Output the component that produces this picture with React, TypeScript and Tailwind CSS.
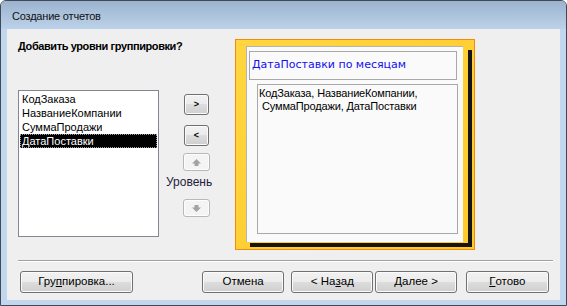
import React from "react";

const btn =
  "flex items-center justify-center rounded-[3px] border border-[#707070] bg-[linear-gradient(#f2f2f2,#ebebeb_50%,#dddddd_50%,#cfcfcf)] shadow-[inset_0_0_0_1px_#fbfbfb] text-[11.5px] text-black";
const btnOff =
  "flex items-center justify-center rounded-[3px] border border-[#b5b9bc] bg-[#f4f4f4] shadow-[inset_0_0_0_1px_#fdfdfd]";

function Arrow({ down }: { down?: boolean }) {
  return (
    <svg width="9" height="7" viewBox="0 0 9 7" className={down ? "rotate-180" : ""}>
      <path d="M4.5 0 L9 4.5 L6.5 4.5 L6.5 7 L2.5 7 L2.5 4.5 L0 4.5 Z" fill="#a3a3a3" />
    </svg>
  );
}

const fields = ["КодЗаказа", "НазваниеКомпании", "СуммаПродажи", "ДатаПоставки"];

export default function App() {
  return (
    <div className="flex h-[306px] w-[567px] flex-col rounded-t-[6px] border border-[#3c4a5a] bg-[#c2d7ee] font-['Liberation_Sans',sans-serif] text-[12px] text-black">
      {/* title bar */}
      <div className="flex h-[28px] items-center rounded-t-[5px] bg-[linear-gradient(#9cb2cd,#a9c0da_40%,#bcd2ea)] px-[11px] pt-[2px] text-[11px] tracking-[-0.2px] text-[#111]">
        Создание отчетов
      </div>

      <div className="mx-[6px] mb-[5px] flex flex-1 flex-col bg-[#efefef]">
        <div className="flex px-[11px] pt-[9px]">
          {/* left side */}
          <div className="w-[217px]">
            <div className="text-[11px] font-bold leading-[16px] tracking-[-0.4px]">Добавить уровни группировки?</div>
            <div className="mt-[36px] flex">
              <div className="h-[147px] w-[141px] border border-[#828790] bg-white px-[1px] pt-[1px] text-[11px]">
                {fields.map((f, i) =>
                  i === 3 ? (
                    <div
                      key={f}
                      className="h-[14px] border border-dotted border-[#9a9a9a] bg-black pl-[1px] leading-[12px] text-white"
                    >
                      {f}
                    </div>
                  ) : (
                    <div key={f} className="h-[14px] pl-[2px] leading-[14px]">
                      {f}
                    </div>
                  )
                )}
              </div>
              <div className="ml-[10px] flex flex-col items-start pt-[4px]">
                <div className={`${btn} ml-[15px] h-[21px] w-[25px] !text-[9px] font-bold`}>&gt;</div>
                <div className={`${btn} ml-[15px] mt-[10px] h-[21px] w-[25px] !text-[9px] font-bold`}>&lt;</div>
                <div className={`${btnOff} ml-[14px] mt-[7px] h-[18px] w-[27px]`}>
                  <Arrow />
                </div>
                <div className="-ml-[3px] mt-[3px] h-[16px] text-[12px] leading-[16px] text-[#1e1e3c]">Уровень</div>
                <div className={`${btnOff} ml-[14px] mt-[9px] h-[18px] w-[27px]`}>
                  <Arrow down />
                </div>
              </div>
            </div>
          </div>

          {/* preview */}
          <div className="mt-[1px] h-[211px] w-[240px] border border-[#f28a12] bg-[linear-gradient(135deg,#ffd640,#ffc928)] pl-[10px] pt-[6px]">
            <div className="h-[197px] w-[222px] shadow-[4px_4px_0_#151515]">
              <div className="h-[196px] w-[217px] border-l border-t border-[#b4b4b4] bg-[#fafafa] pl-[2px] pt-[4px]">
                <div className="flex h-[29px] w-[208px] items-center border border-[#a8a8a8] pl-[2px] font-['DejaVu_Sans',sans-serif] text-[11px] text-[#1010f0]">
                  ДатаПоставки по месяцам
                </div>
                <div className="ml-[8px] mt-[4px] h-[150px] w-[201px] border border-[#a8a8a8] pl-[1px] pt-[2px] text-[11px] leading-[13px] tracking-[-0.15px]">
                  <div>КодЗаказа, НазваниеКомпании,</div>
                  <div className="pl-[3px]">СуммаПродажи, ДатаПоставки</div>
                </div>
              </div>
            </div>
          </div>
        </div>

        {/* footer */}
        <div className="mt-auto px-[11px] pb-[7px]">
          <div className="h-[2px] w-[535px] border-t border-[#a0a0a0] bg-white" />
          <div className="mt-[9px] flex">
            <div className={`${btn} ml-[2px] h-[22px] w-[114px]`}>
              Гру<span className="underline">п</span>пировка...
            </div>
            <div className={`${btn} ml-[69px] h-[22px] w-[83px]`}>Отмена</div>
            <div className={`${btn} ml-[7px] h-[22px] w-[83px]`}>
              &lt; На<span className="underline">з</span>ад
            </div>
            <div className={`${btn} ml-[2px] h-[22px] w-[82px] border-[#3c7fb1] shadow-[inset_0_0_0_1px_#bfe4fb]`}>
              <span className="underline">Д</span>алее &gt;
            </div>
            <div className={`${btn} ml-[9px] h-[22px] w-[84px]`}>
              <span className="underline">Г</span>отово
            </div>
          </div>
        </div>
      </div>
    </div>
  );
}
